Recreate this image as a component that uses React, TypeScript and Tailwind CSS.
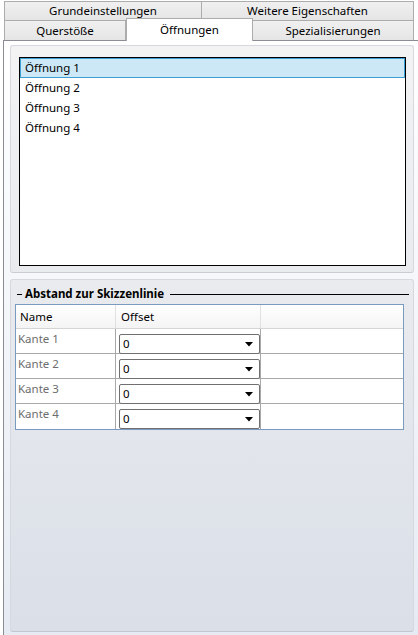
import React from "react";

const font = { fontFamily: '"Noto Sans", "Open Sans", sans-serif' };

function Combo() {
  return (
    <div className="mt-[5px] ml-[3px] w-[141px] h-[20px] border border-[#707070] rounded-[2px] bg-white flex items-center justify-between pl-[3px] pr-[6px]">
      <span className="text-[11.5px] leading-none text-black">0</span>
      <svg width="8" height="5" viewBox="0 0 8 5">
        <path d="M0 0 H8 L4 4.5 Z" fill="#000" />
      </svg>
    </div>
  );
}

export default function App() {
  const rows = ["Kante 1", "Kante 2", "Kante 3", "Kante 4"];
  const items = ["Öffnung 1", "Öffnung 2", "Öffnung 3", "Öffnung 4"];
  return (
    <div className="w-[418px] h-[635px] bg-white overflow-hidden text-[11.5px] text-black" style={font}>
      {/* Tab row 1 */}
      <div className="flex h-[20px] pl-[4px] pt-[1px]">
        <div className="w-[198px] h-[19px] border border-b-0 border-[#acacac] bg-gradient-to-b from-[#f0f0f0] to-[#e5e5e5] flex items-center justify-center">
          Grundeinstellungen
        </div>
        <div className="w-[212px] h-[19px] border border-b-0 border-l-0 border-[#acacac] bg-gradient-to-b from-[#f0f0f0] to-[#e5e5e5] flex items-center justify-center">
          Weitere Eigenschaften
        </div>
      </div>
      {/* Tab row 2 */}
      <div className="flex h-[20px] pl-[4px] relative z-10">
        <div className="w-[122px] h-[20px] border border-b-0 border-[#acacac] bg-gradient-to-b from-[#f0f0f0] to-[#e5e5e5] flex items-center justify-center">
          Querstöße
        </div>
        <div className="w-[127px] h-[23px] -mt-[2px] border border-b-0 border-[#acacac] bg-white flex items-start justify-center pt-[2px]">
          Öffnungen
        </div>
        <div className="w-[161px] h-[20px] border border-b-0 border-l-0 border-[#acacac] bg-gradient-to-b from-[#f0f0f0] to-[#e5e5e5] flex items-center justify-center">
          Spezialisierungen
        </div>
      </div>
      {/* Content */}
      <div className="ml-[3px] h-[595px] border-l border-t border-[#8a8d94] bg-gradient-to-b from-white to-[#e6ebf3] pt-[4px] pl-[6px] pr-[4px]">
        {/* Upper panel */}
        <div className="h-[228px] rounded-[3px] border border-[#d5d8de] border-b-[#c9ccd3] bg-gradient-to-b from-[#f3f3f4] to-[#e9ebee] pt-[11px] pl-[8px] pr-[7px] pb-[6px]">
          <div className="h-full border border-black bg-white pt-[0px]">
            {items.map((t, i) => (
              <div
                key={t}
                className={
                  i === 0
                    ? "h-[20px] flex items-center pl-[4px] bg-[#cce8f6] border border-[#3d9fd2]"
                    : "h-[20px] flex items-center pl-[5px]"
                }
              >
                {t}
              </div>
            ))}
          </div>
        </div>
        {/* Lower panel */}
        <div className="mt-[6px] h-[353px] rounded-[3px] border border-[#d5d8de] border-b-[#c2c6cf] bg-gradient-to-b from-[#e9ebee] to-[#dadfe8] pt-[6px] pl-[4px] pr-[9px]">
          <div className="flex items-center h-[16px] pl-[2px]">
            <div className="w-[5px] h-px bg-black" />
            <span className="font-bold ml-[3px] mr-[6px] whitespace-nowrap">Abstand zur Skizzenlinie</span>
            <div className="flex-1 h-px bg-black mr-[-5px]" />
          </div>
          <div className="mt-[2px] border border-[#7b9ac0] bg-white">
            <div className="flex h-[24px] bg-gradient-to-b from-white to-[#f4f4f5] border-b border-[#d5d5d5]">
              <div className="w-[100px] border-r border-[#e0e0e0] flex items-center pl-[4px]">Name</div>
              <div className="w-[145px] border-r border-[#e0e0e0] flex items-center pl-[5px]">Offset</div>
              <div className="flex-1" />
            </div>
            {rows.map((r, i) => (
              <div key={r} className={"flex h-[25px]" + (i < 3 ? " border-b border-[#a8a8a8]" : "")}>
                <div className="w-[100px] border-r border-[#a8a8a8] pl-[2px] pt-[1px] text-[#6d6d6d]">{r}</div>
                <div className="w-[145px] border-r border-[#a8a8a8]">
                  <Combo />
                </div>
                <div className="flex-1" />
              </div>
            ))}
          </div>
        </div>
      </div>
    </div>
  );
}
